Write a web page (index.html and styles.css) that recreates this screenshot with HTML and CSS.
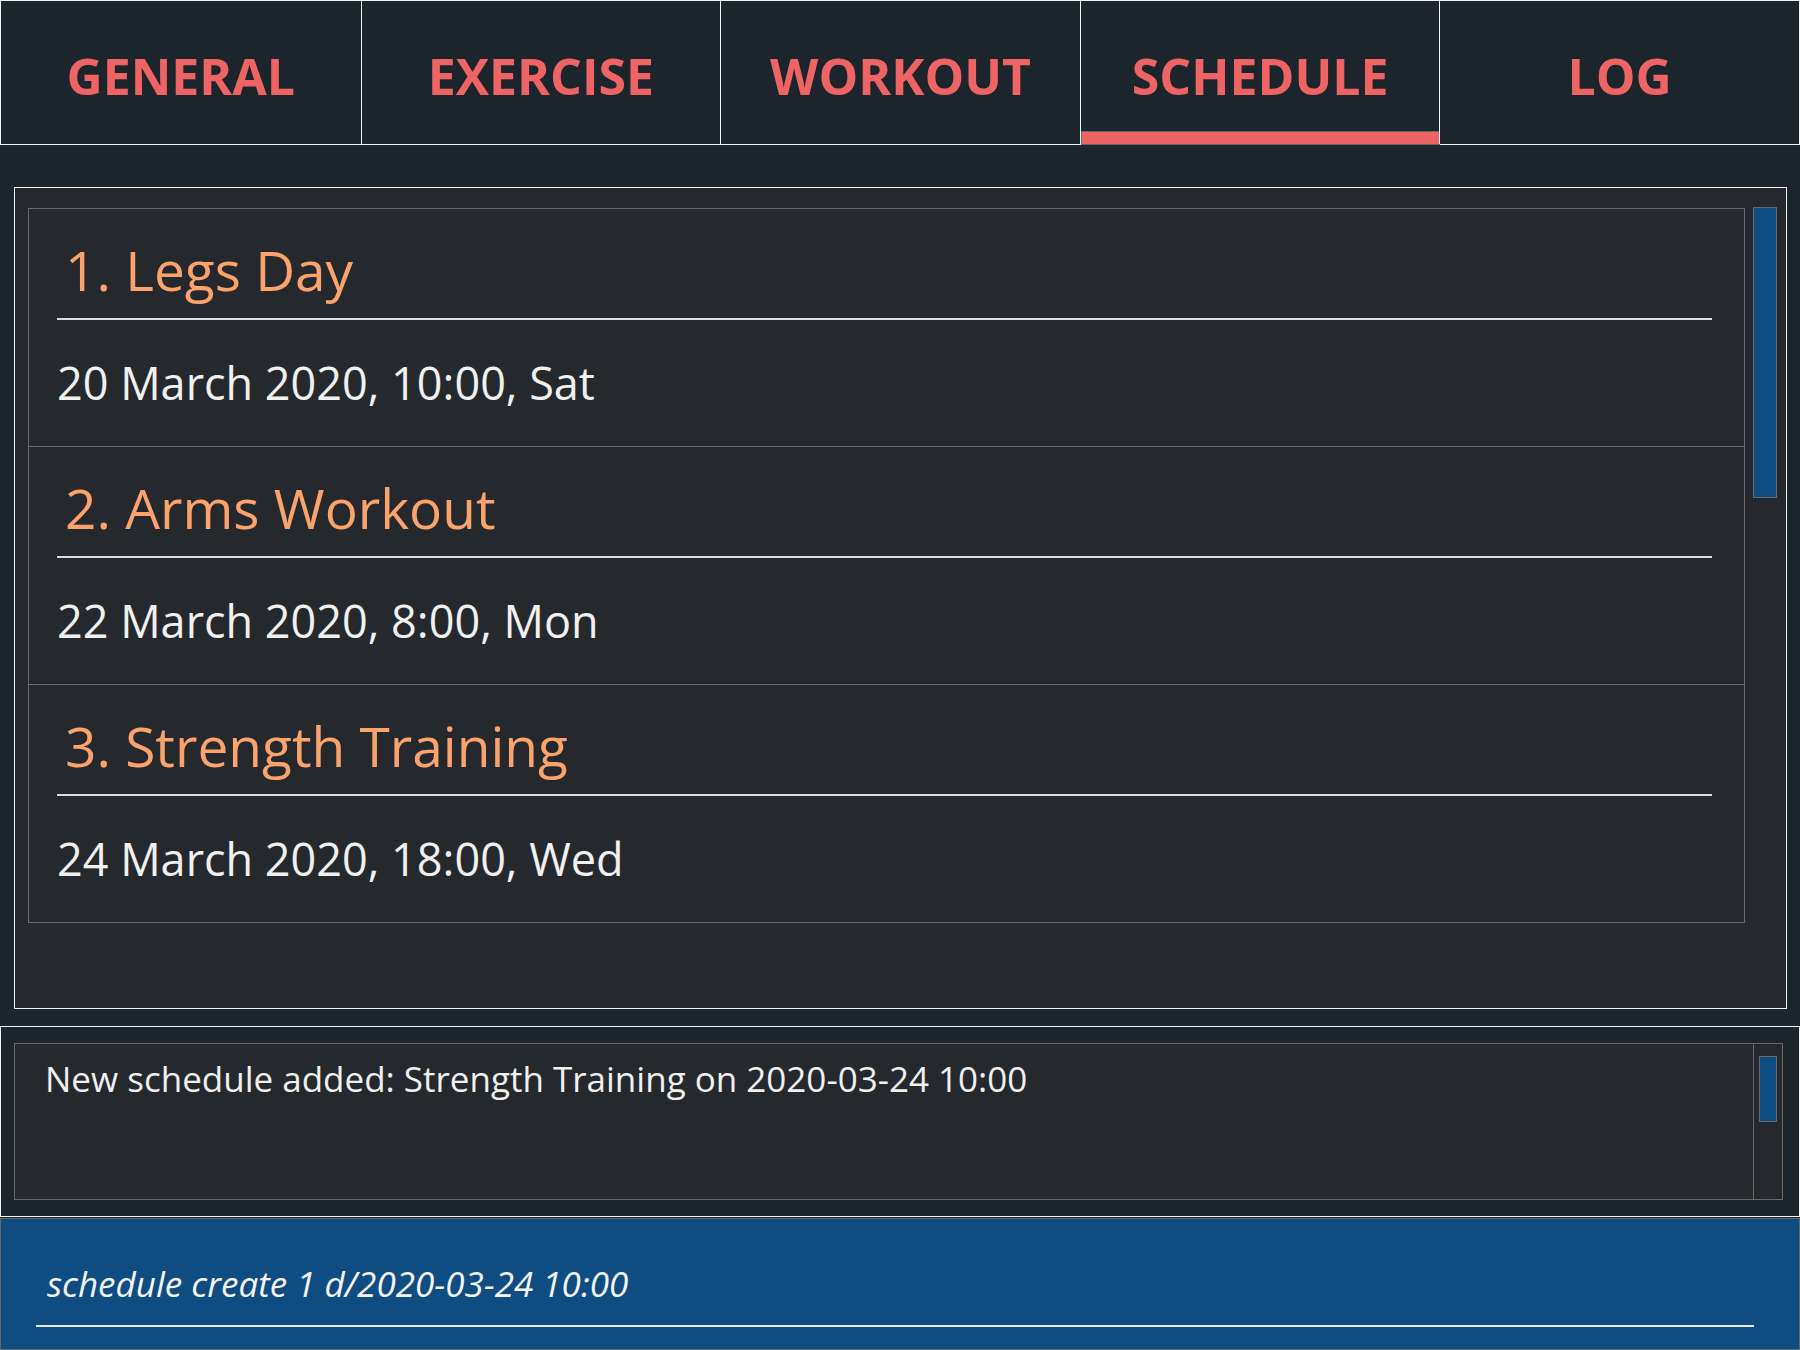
FILE: index.html
```html
<!DOCTYPE html>
<html>
<head>
<meta charset="utf-8">
<link rel="stylesheet" href="styles.css">
</head>
<body>
<div class="app">
  <nav class="tabs">
    <div class="tab">GENERAL</div>
    <div class="tab">EXERCISE</div>
    <div class="tab">WORKOUT</div>
    <div class="tab active">SCHEDULE</div>
    <div class="tab">LOG</div>
  </nav>

  <section class="panel">
    <div class="list">
      <div class="card">
        <div class="card-title">1. Legs Day</div>
        <div class="card-date">20 March 2020, 10:00, Sat</div>
      </div>
      <div class="card">
        <div class="card-title">2. Arms Workout</div>
        <div class="card-date">22 March 2020, 8:00, Mon</div>
      </div>
      <div class="card">
        <div class="card-title">3. Strength Training</div>
        <div class="card-date">24 March 2020, 18:00, Wed</div>
      </div>
    </div>
    <div class="vscroll"></div>
  </section>

  <section class="result">
    <div class="result-box">
      <div class="result-text">New schedule added: Strength Training on 2020-03-24 10:00</div>
      <div class="result-track"><div class="result-thumb"></div></div>
    </div>
  </section>

  <section class="command">
    <div class="command-field">schedule create 1 d/2020-03-24 10:00</div>
  </section>
</div>
</body>
</html>
```
FILE: styles.css
```css
* { box-sizing: border-box; }
html, body {
  margin: 0;
  padding: 0;
  background: #1d252c;
}
body {
  width: 1800px;
  height: 1350px;
  overflow: hidden;
  font-family: "Open Sans", "Liberation Sans", sans-serif;
}
.app {
  display: flex;
  flex-direction: column;
  width: 1800px;
  height: 1350px;
}

/* Tabs */
.tabs {
  display: grid;
  grid-template-columns: repeat(5, 1fr);
  height: 145px;
  border: 1px solid #f2f2f2;
  background: #1d252c;
}
.tab {
  position: relative;
  display: flex;
  align-items: center;
  justify-content: center;
  padding-top: 6px;
  font-weight: 700;
  font-size: 50px;
  color: #ee6464;
  border-left: 1px solid #f2f2f2;
}
.tab:first-child { border-left: none; }
.tab.active::after {
  content: "";
  position: absolute;
  left: 0;
  right: -1px;
  bottom: -1px;
  height: 12px;
  background: #ee6464;
  border: 1px solid #6a6a6a;
}

/* Main list panel */
.panel {
  display: flex;
  align-items: flex-start;
  margin: 42px 13px 0 14px;
  height: 822px;
  background: #25292d;
  border: 1px solid #f2f2f2;
  padding: 20px 9px 0 13px;
  gap: 8px;
}
.list {
  flex: 1;
  border: 1px solid #6a6a6a;
  border-bottom: none;
}
.card {
  height: 238px;
  padding: 29px 32px 0 28px;
  border-bottom: 1px solid #6a6a6a;
}
.card-title {
  font-size: 55px;
  line-height: 64px;
  color: #fba36c;
  padding-left: 8px;
  padding-bottom: 16px;
  border-bottom: 2px solid #dcdcdc;
}
.card-date {
  margin-top: 37px;
  font-size: 45px;
  line-height: 52px;
  color: #f0f0f0;
}
.vscroll {
  width: 24px;
  height: 291px;
  margin-top: -1px;
  background: #0f4c82;
  border: 1px solid #6a6a6a;
}

/* Result display */
.result {
  margin-top: 17px;
  height: 191px;
  border: 1px solid #f2f2f2;
  padding: 16px 16px 16px 13px;
}
.result-box {
  display: flex;
  height: 157px;
  background: #25292d;
  border: 1px solid #6a6a6a;
}
.result-text {
  flex: 1;
  padding: 15px 0 0 30px;
  font-size: 35px;
  line-height: 40px;
  color: #f0f0f0;
}
.result-track {
  width: 29px;
  border-left: 1px solid #6a6a6a;
  padding: 12px 0 0 5px;
}
.result-thumb {
  width: 18px;
  height: 66px;
  background: #0f4c82;
  border: 1px solid #6a6a6a;
}

/* Command box */
.command {
  flex: 1;
  margin-top: 1px;
  background: #0f4c82;
  border: 1px solid #6a6a6a;
  padding: 45px 45px 0 35px;
}
.command-field {
  padding: 0 0 21px 11px;
  font-size: 35px;
  line-height: 40px;
  font-style: italic;
  color: #f4f4f4;
  border-bottom: 2px solid #e6e6e6;
}
```
